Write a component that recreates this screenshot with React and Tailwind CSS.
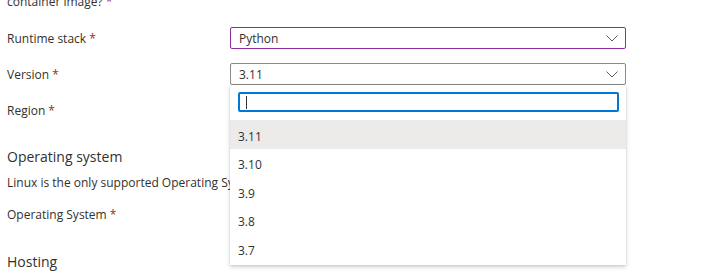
const Req = () => <span className="text-[#a4262c] ml-[3px]">*</span>;

const Chevron = () => (
  <svg width="12" height="12" viewBox="0 0 12 12" className="absolute right-[7px] top-1/2 -translate-y-1/2">
    <path d="M0.5 3.5l5.5 5.5 5.5-5.5" fill="none" stroke="#605e5c" strokeWidth="1" />
  </svg>
);

const versions = ["3.11", "3.10", "3.9", "3.8", "3.7"];

const Row = ({ label, children, className = "" }) => (
  <div className={`grid grid-cols-[223px_396px] h-[36px] items-center ${className}`}>
    <div className="pt-[2px]">
      {label}
      <Req />
    </div>
    <div className="relative">{children}</div>
  </div>
);

const App = () => {
  return (
    <div
      className="w-[727px] h-[278px] overflow-hidden bg-white text-[#323130] text-[12px] pl-[7px]"
      style={{ fontFamily: '"Open Sans", "Noto Sans", sans-serif' }}
    >
      <div className="-mt-[8px] h-[28px] leading-[20px]">
        container image?
        <Req />
      </div>

      <Row label="Runtime stack">
        <div className="relative h-[22px] border border-[#8a2da5] rounded-[2px] pl-[8px] leading-[22px]">
          Python
          <Chevron />
        </div>
      </Row>

      <Row label="Version">
        <div className="relative h-[22px] border border-[#8a8886] rounded-[2px] pl-[8px] leading-[22px]">
          3.11
          <Chevron />
        </div>
        <div className="absolute left-0 top-[22px] w-[396px] bg-white shadow-[0_1.6px_4px_rgba(0,0,0,0.2),0_0_1px_rgba(0,0,0,0.15)] z-10 pt-[7px] pb-[2px]">
          <div className="ml-[8px] w-[381px] h-[20px] border-2 border-[#0078d4] rounded-[2px] flex items-center pl-[6px]">
            <div className="w-px h-[13px] bg-[#323130]" />
          </div>
          <div className="mt-[8px]">
            {versions.map((v, i) => (
              <div
                key={v}
                className={`h-[28.5px] flex items-center pl-[8px] pt-[5px] ${i === 0 ? "bg-[#edebe9]" : ""}`}
              >
                {v}
              </div>
            ))}
          </div>
        </div>
      </Row>

      <Row label="Region">
        <div className="h-[22px]" />
      </Row>

      <div className="mt-[19px] text-[14px] leading-[20px]">Operating system</div>
      <div className="mt-[6px] leading-[20px] whitespace-nowrap">
        Linux is the only supported Operating System for Python apps.
      </div>
      <Row label="Operating System" className="mt-[3px]">
        <div className="h-[22px]" />
      </Row>
      <div className="mt-[20px] text-[14px] leading-[20px]">Hosting</div>
    </div>
  );
};

export default App;
